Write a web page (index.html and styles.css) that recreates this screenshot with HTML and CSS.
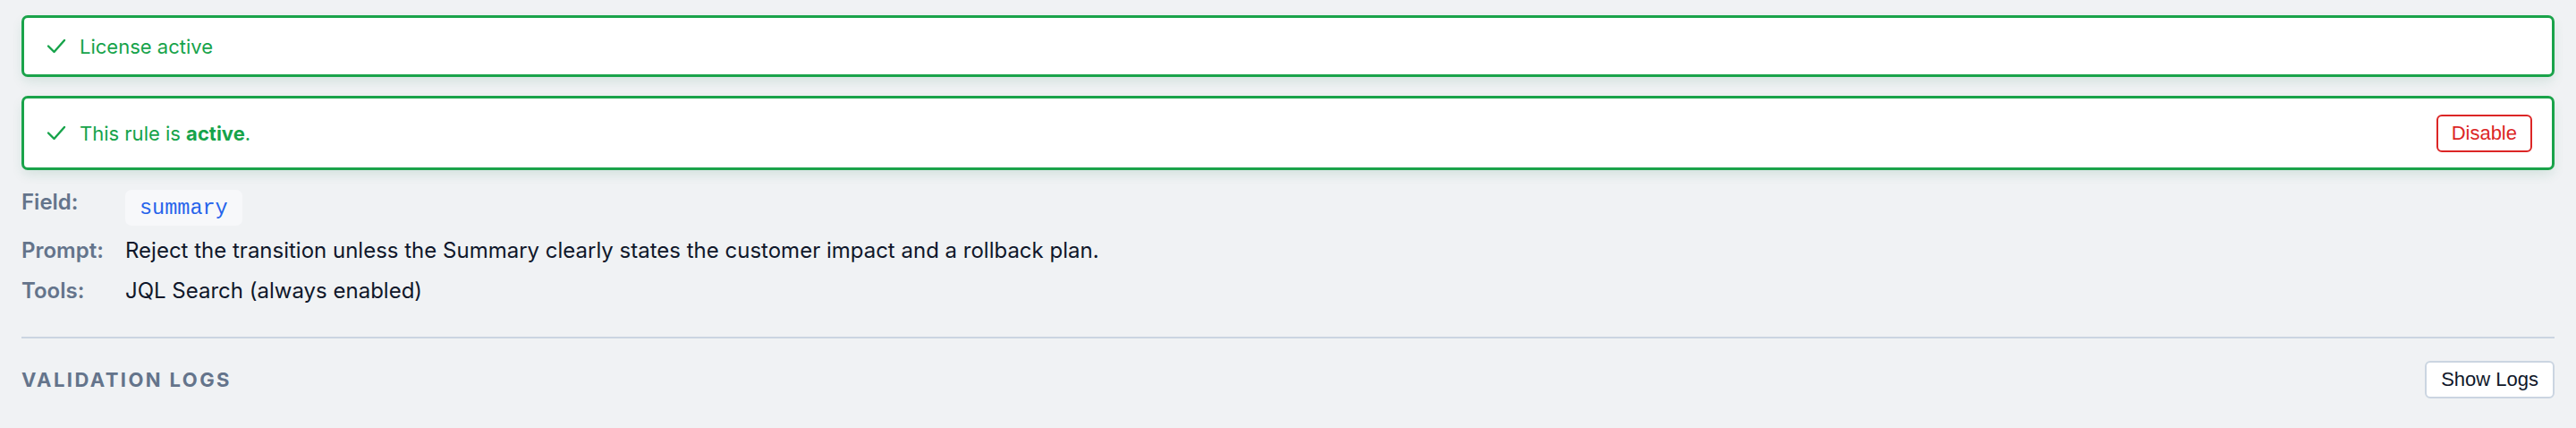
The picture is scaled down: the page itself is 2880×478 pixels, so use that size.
FILE: index.html
```html
<!DOCTYPE html>
<html lang="en">
<head>
<meta charset="utf-8">
<title>Rule</title>
<link rel="stylesheet" href="styles.css">
</head>
<body>
<div class="page">
  <div class="card card-license">
    <div class="status">
      <svg class="check" width="22" height="17" viewBox="0 0 22 17"><polyline points="2,8.5 8.5,15 20,2" fill="none" stroke="currentColor" stroke-width="2.4" stroke-linecap="round" stroke-linejoin="round"/></svg>
      <span>License active</span>
    </div>
  </div>
  <div class="card card-rule">
    <div class="status">
      <svg class="check" width="22" height="17" viewBox="0 0 22 17"><polyline points="2,8.5 8.5,15 20,2" fill="none" stroke="currentColor" stroke-width="2.4" stroke-linecap="round" stroke-linejoin="round"/></svg>
      <span>This rule is <strong>active</strong>.</span>
    </div>
    <button class="btn btn-danger" type="button">Disable</button>
  </div>

  <div class="details">
    <div class="label">Field:</div>
    <div class="value"><code class="chip">summary</code></div>
    <div class="label">Prompt:</div>
    <div class="value">Reject the transition unless the Summary clearly states the customer impact and a rollback plan.</div>
    <div class="label">Tools:</div>
    <div class="value">JQL Search (always enabled)</div>
  </div>

  <div class="section">
    <div class="section-head">
      <h2 class="section-title">VALIDATION LOGS</h2>
      <button class="btn btn-plain" type="button">Show Logs</button>
    </div>
  </div>
</div>
</body>
</html>
```

FILE: styles.css
```css
html, body {
  margin: 0;
  padding: 0;
  background: #f0f2f4;
}

body {
  font-family: Inter, "Noto Sans", sans-serif;
  font-size: 24px;
  color: #0f172a;
}

.page {
  padding: 17px 24px 0 24px;
}

.card {
  box-sizing: border-box;
  display: flex;
  align-items: center;
  justify-content: space-between;
  background: #ffffff;
  border: 3px solid #1aa34a;
  border-radius: 7px;
  padding: 0 22px 0 25px;
  box-shadow: 0 6px 14px -2px rgba(20, 120, 80, 0.14);
}

.card-license {
  height: 69px;
}

.card-rule {
  height: 83px;
  margin-top: 21px;
}

.status {
  display: flex;
  align-items: center;
  gap: 15px;
  color: #16a34a;
  font-size: 22px;
  line-height: 34px;
}

.status strong {
  font-weight: 700;
}

.check {
  display: block;
  color: #16a34a;
  flex: none;
}

.btn {
  box-sizing: border-box;
  height: 42px;
  padding: 0 15px;
  border-radius: 6px;
  background: #ffffff;
  font-family: "Liberation Sans", Arial, sans-serif;
  font-size: 22px;
  line-height: 1;
  cursor: pointer;
}

.btn-danger {
  border: 2px solid #dc2626;
  color: #dc2626;
}

.btn-plain {
  border: 2px solid #cbd5e1;
  color: #0f172a;
  padding: 0 16px;
}

.details {
  display: grid;
  grid-template-columns: 104px 1fr;
  column-gap: 12px;
  row-gap: 11px;
  margin-top: 19px;
  line-height: 34px;
}

.label {
  color: #64748b;
  font-weight: 600;
}

.value {
  color: #0f172a;
}

.chip {
  display: inline-block;
  box-sizing: border-box;
  height: 40px;
  margin-top: 3px;
  padding: 0 16px;
  border-radius: 7px;
  background: #f7f8fa;
  color: #2563eb;
  font-family: "Liberation Mono", "Courier New", monospace;
  font-size: 23.5px;
  line-height: 42px;
  vertical-align: top;
}

.section {
  margin-top: 34px;
  border-top: 2px solid #cbd5e1;
}

.section-head {
  display: flex;
  align-items: center;
  justify-content: space-between;
  margin-top: 25px;
}

.section-title {
  margin: 0;
  font-size: 22px;
  font-weight: 700;
  letter-spacing: 0.11em;
  color: #64748b;
  line-height: 42px;
}
```
